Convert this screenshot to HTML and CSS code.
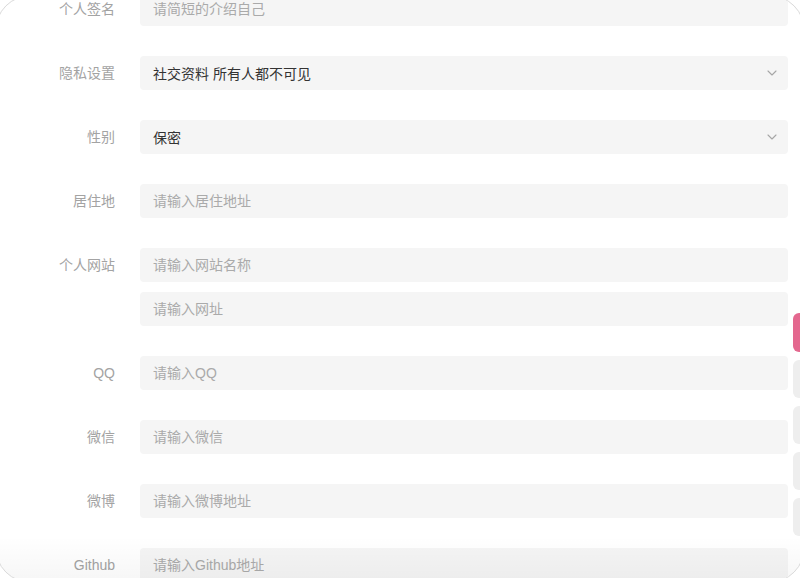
FILE: index.html
```html
<!DOCTYPE html>
<html lang="zh-CN">
<head>
<meta charset="utf-8">
<title>个人资料</title>
<link rel="stylesheet" href="styles.css">
</head>
<body>
<div class="window">
  <form class="profile-form">
    <div class="field">
      <label class="field-label">个人签名</label>
      <div class="field-control">
        <input class="text-input" type="text" placeholder="请简短的介绍自己">
      </div>
    </div>
    <div class="field">
      <label class="field-label">隐私设置</label>
      <div class="field-control">
        <div class="select">
          <span class="select-value">社交资料 所有人都不可见</span>
          <svg class="chevron" width="10" height="6" viewBox="0 0 10 6"><path d="M1 1l4 4 4-4" fill="none" stroke="#a6a6a6" stroke-width="1.1" stroke-linecap="round" stroke-linejoin="round"/></svg>
        </div>
      </div>
    </div>
    <div class="field">
      <label class="field-label">性别</label>
      <div class="field-control">
        <div class="select">
          <span class="select-value">保密</span>
          <svg class="chevron" width="10" height="6" viewBox="0 0 10 6"><path d="M1 1l4 4 4-4" fill="none" stroke="#a6a6a6" stroke-width="1.1" stroke-linecap="round" stroke-linejoin="round"/></svg>
        </div>
      </div>
    </div>
    <div class="field">
      <label class="field-label">居住地</label>
      <div class="field-control">
        <input class="text-input" type="text" placeholder="请输入居住地址">
      </div>
    </div>
    <div class="field">
      <label class="field-label">个人网站</label>
      <div class="field-control stacked">
        <input class="text-input" type="text" placeholder="请输入网站名称">
        <input class="text-input" type="text" placeholder="请输入网址">
      </div>
    </div>
    <div class="field">
      <label class="field-label">QQ</label>
      <div class="field-control">
        <input class="text-input" type="text" placeholder="请输入QQ">
      </div>
    </div>
    <div class="field">
      <label class="field-label">微信</label>
      <div class="field-control">
        <input class="text-input" type="text" placeholder="请输入微信">
      </div>
    </div>
    <div class="field">
      <label class="field-label">微博</label>
      <div class="field-control">
        <input class="text-input" type="text" placeholder="请输入微博地址">
      </div>
    </div>
    <div class="field">
      <label class="field-label">Github</label>
      <div class="field-control">
        <input class="text-input" type="text" placeholder="请输入Github地址">
      </div>
    </div>
  </form>
</div>
<nav class="side-tabs">
  <span class="side-tab active"></span>
  <span class="side-tab"></span>
  <span class="side-tab"></span>
  <span class="side-tab"></span>
  <span class="side-tab"></span>
</nav>
</body>
</html>
```

FILE: styles.css
```css
html, body {
  margin: 0;
  padding: 0;
  background: #ffffff;
  overflow: hidden;
}

body {
  width: 800px;
  height: 578px;
  font-family: "Liberation Sans", "Noto Sans CJK SC", sans-serif;
  font-size: 14px;
}

/* rounded window frame, slightly larger than the viewport */
.window {
  position: relative;
  box-sizing: border-box;
  margin: -5px;
  height: 588px;
  border: 1px solid #d9d9d9;
  border-radius: 36px;
  background: #ffffff;
  overflow: hidden;
}

.window::after {
  content: "";
  position: absolute;
  left: 0;
  right: 0;
  bottom: 0;
  height: 46px;
  background: linear-gradient(to bottom, rgba(0, 0, 0, 0), rgba(0, 0, 0, 0.035));
  pointer-events: none;
}

.profile-form {
  margin: -4px 0 0 0;
  padding: 0 16px 0 0;
}

.field {
  display: grid;
  grid-template-columns: 119px 1fr;
  column-gap: 25px;
  margin-bottom: 30px;
}

.field-label {
  text-align: right;
  line-height: 34px;
  color: #a3a3a3;
  white-space: nowrap;
}

.field-control {
  display: flex;
  flex-direction: column;
}

.field-control.stacked {
  gap: 10px;
}

.text-input,
.select {
  box-sizing: border-box;
  width: 100%;
  height: 34px;
  margin: 0;
  padding: 0 11px 0 13px;
  border: none;
  border-radius: 4px;
  background: #f5f5f5;
  font: inherit;
  color: #333333;
  outline: none;
}

.text-input::placeholder {
  color: #aaaaaa;
  opacity: 1;
}

.select {
  display: flex;
  align-items: center;
  justify-content: space-between;
}

.select-value {
  color: #333333;
}

.chevron {
  display: block;
}

/* section tabs pinned to the right edge */
.side-tabs {
  position: fixed;
  top: 313px;
  left: 793px;
  display: flex;
  flex-direction: column;
  gap: 8px;
}

.side-tab {
  display: block;
  width: 16px;
  height: 38px;
  border-radius: 6px;
  background: #eeeeee;
}

.side-tab.active {
  height: 39px;
  background: #e4688f;
}
```
